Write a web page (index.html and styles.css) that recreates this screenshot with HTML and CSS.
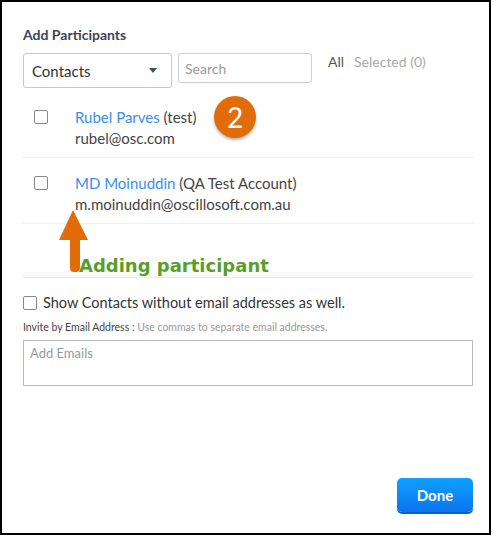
FILE: index.html
```html
<!DOCTYPE html>
<html lang="en">
<head>
    <meta charset="UTF-8">
    <title>Add Participants</title>
    <link rel="stylesheet" href="styles.css">
</head>
<body>
    <div class="dialog">
        <h2 class="title">Add Participants</h2>

        <!-- Filter-Zeile -->
        <div class="toolbar">
            <div class="select">
                <span>Contacts</span>
                <span class="caret"></span>
            </div>
            <div class="search">Search</div>
            <div class="tabs">
                <span class="tab active">All</span>
                <span class="tab">Selected (0)</span>
            </div>
        </div>

        <!-- Kontaktliste -->
        <div class="list">
            <div class="row">
                <span class="box"></span>
                <div class="info">
                    <div><a class="name">Rubel Parves</a> (test)</div>
                    <div>rubel@osc.com</div>
                </div>
            </div>
            <div class="row">
                <span class="box"></span>
                <div class="info">
                    <div><a class="name">MD Moinuddin</a> (QA Test Account)</div>
                    <div>m.moinuddin@oscillosoft.com.au</div>
                </div>
            </div>
        </div>

        <div class="spacer"></div>

        <label class="show-all">
            <span class="box small"></span>
            Show Contacts without email addresses as well.
        </label>

        <div class="invite-label">Invite by Email Address : <span>Use commas to separate email addresses.</span></div>
        <div class="emails">Add Emails</div>

        <div class="footer">
            <button class="done">Done</button>
        </div>

        <!-- Annotationen -->
        <div class="badge">2</div>
        <svg class="arrow" width="34" height="66" viewBox="0 0 34 66">
            <path d="M15 0 L30 30 L22 30 L22 58 Q22 62 18 62 L16 62 Q12 62 12 58 L12 30 L1 30 Z" fill="#e36c0a"/>
        </svg>
        <div class="note">Adding participant</div>
    </div>
</body>
</html>
```

FILE: styles.css
```css
body {
    margin: 0;
    font-family: Lato, "Open Sans", sans-serif;
    color: #333;
    background: #fff;
}

.dialog {
    position: relative;
    width: 491px;
    height: 535px;
    box-sizing: border-box;
    border: 2px solid #000;
    padding: 24px 16px 0 21px;
    display: flex;
    flex-direction: column;
}

.title {
    margin: 0;
    font-size: 14px;
    line-height: 17px;
    font-weight: bold;
    color: #3b4555;
}

.toolbar {
    display: flex;
    align-items: flex-start;
    margin-top: 10px;
}

.select {
    width: 149px;
    height: 35px;
    box-sizing: border-box;
    border: 1px solid #c8c8c8;
    border-radius: 3px;
    display: flex;
    align-items: center;
    justify-content: space-between;
    padding: 0 14px 0 8px;
    font-size: 15px;
}

.caret {
    width: 0;
    height: 0;
    border-left: 4px solid transparent;
    border-right: 4px solid transparent;
    border-top: 5px solid #3d5066;
}

.search {
    margin-left: 6px;
    width: 134px;
    height: 30px;
    box-sizing: border-box;
    border: 1px solid #ccd;
    border-radius: 3px;
    padding: 6px 6px;
    font-size: 14px;
    color: #999;
}

.tabs {
    margin-left: 16px;
    font-size: 14px;
    display: flex;
    gap: 10px;
}

.tab {
    color: #aaa;
}

.tab.active {
    color: #555;
}

.list {
    margin-top: 4px;
}

.row {
    display: flex;
    border-bottom: 1px solid #eee;
    padding: 15px 0 8px;
}

.box {
    width: 12px;
    height: 12px;
    border: 1px solid #888;
    border-radius: 2px;
    margin: 3px 0 0 11px;
    flex-shrink: 0;
}

.info {
    margin-left: 27px;
    font-size: 15px;
    line-height: 21px;
    color: #444;
}

.name {
    color: #3a8ee6;
}

/* Trennlinie mit leichtem Verlauf */
.spacer {
    height: 53px;
    border-bottom: 1px solid #ececec;
    background: linear-gradient(to bottom, rgba(0, 0, 0, 0) 85%, rgba(0, 0, 0, 0.03));
}

.show-all {
    display: flex;
    align-items: center;
    margin-top: 16px;
    font-size: 14.5px;
    color: #333;
}

.box.small {
    margin: 0 6px 0 0;
}

.invite-label {
    margin-top: 10px;
    font-size: 10.5px;
    color: #444;
}

.invite-label span {
    color: #999;
}

.emails {
    margin-top: 7px;
    height: 46px;
    box-sizing: border-box;
    border: 1px solid #bbb;
    padding: 4px 6px;
    font-size: 13px;
    color: #999;
}

.footer {
    margin-top: auto;
    margin-bottom: 21px;
    display: flex;
    justify-content: flex-end;
}

.done {
    width: 76px;
    height: 34px;
    border: none;
    border-radius: 5px;
    background: linear-gradient(#10a0ff, #0a74f0);
    box-shadow: 0 2px 0 #0860c8;
    color: #fff;
    font-family: Lato, sans-serif;
    font-weight: bold;
    font-size: 15px;
}

/* Overlays */
.badge {
    position: absolute;
    left: 212px;
    top: 94px;
    width: 42px;
    height: 42px;
    border-radius: 50%;
    background: #e36c0a;
    color: #fff;
    font-size: 28px;
    line-height: 42px;
    text-align: center;
    box-shadow: 0 2px 3px rgba(0, 0, 0, 0.3);
}

.arrow {
    position: absolute;
    left: 56px;
    top: 208px;
}

.note {
    position: absolute;
    left: 77px;
    top: 253px;
    font-family: "DejaVu Sans", Verdana, sans-serif;
    font-weight: bold;
    font-size: 18px;
    color: #5a9e2a;
}
```
